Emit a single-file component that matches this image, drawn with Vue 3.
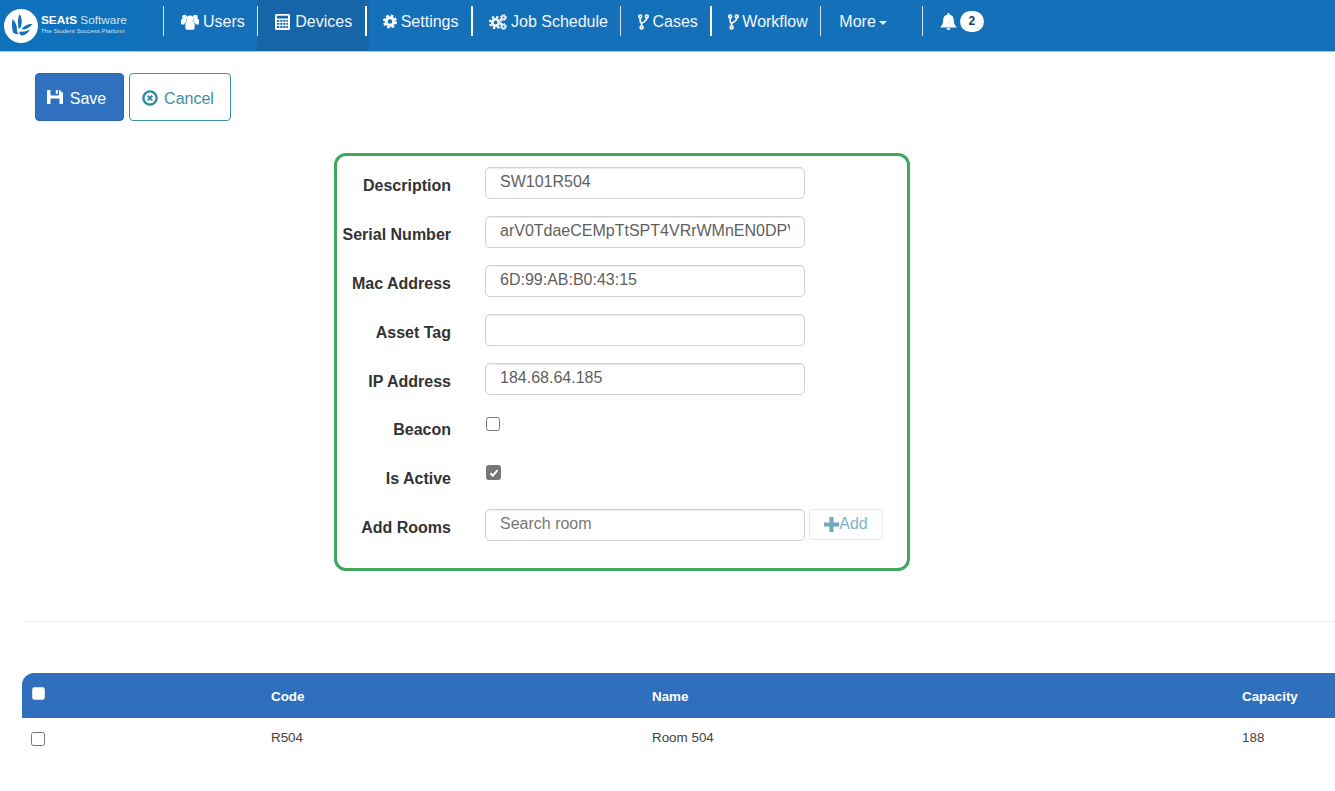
<script setup>
const rooms = [{ code: 'R504', name: 'Room 504', capacity: 188 }];
</script>

<template>
  <div class="page">
    <nav class="navbar">
      <a class="brand">
        <svg class="brand-mark" viewBox="0 0 34 34">
          <circle cx="17" cy="17" r="17" fill="#fff" />
          <path d="M8.500 10c2.500 2.500 4.500 6 4.500 10.500 0 2 .5 3.500 2 4.500-2 .4-4.500 0-6-1.500C8 19 7.500 14 8.500 10z" fill="#1570ba" />
          <path d="M15.500 5c2.300 3 3 8 1.300 13-.6 1-1.300 1.600-2 2-1.300-5-1.200-10.500.7-15z" fill="#1570ba" />
          <path d="M17.500 20.500c2-3.500 6-5.500 11-5.500-2.300 3.500-6 5.500-11 5.500z" fill="#1570ba" />
          <path d="M15 22.500c3 .6 7 0 11-2-2 3.500-5 6-8 6-1.500 0-2.500-1.700-3-4z" fill="#1570ba" />
        </svg>
        <span class="brand-text">
          <span class="brand-name"><b>SEAtS</b> Software</span>
          <span class="brand-sub">The Student Success Platform</span>
        </span>
      </a>
      <ul class="nav-list">
        <li class="nav-item">
          <svg class="ico" width="18" height="16" viewBox="0 0 18 16">
            <circle cx="9" cy="5" r="3.400" /><circle cx="3.600" cy="3.200" r="2.400" /><circle cx="14.400" cy="3.200" r="2.400" />
            <path d="M4.400 9.800c0-1.200 1-2.100 2.200-2.100h4.800c1.200 0 2.200.9 2.200 2.100v4.100c0 1.100-.9 1.900-2 1.900H6.400c-1.100 0-2-.8-2-1.900z" />
            <path d="M0 6.300c0-.7.500-1.200 1.200-1.200h3.900c.1 1 .6 1.800 1.200 2.300-1.600.4-2.800 1.500-3 3.200H1.200C.5 10.600 0 10.100 0 9.400zM18 6.300c0-.7-.5-1.200-1.200-1.200h-3.900c-.1 1-.6 1.800-1.200 2.300 1.600.4 2.800 1.500 3 3.200h3.100c.7 0 1.200-.5 1.200-1.200z" />
          </svg>
          Users
        </li>
        <li class="nav-item active">
          <svg class="ico calc" width="15" height="16" viewBox="0 0 15 16">
            <path fill-rule="evenodd" d="M1.500 0h12c.8 0 1.500.7 1.500 1.500v13c0 .8-.7 1.500-1.500 1.500h-12C.7 16 0 15.300 0 14.500v-13C0 .7.700 0 1.500 0zM2 1.800v2.700h11V1.800zM2 6v1.800h2.300V6zM5.200 6v1.800h2.200V6zM8.300 6v1.800h2.200V6zM11.400 6v1.800H13V6zM2 9v1.800h2.300V9zM5.200 9v1.800h2.200V9zM8.300 9v1.800h2.200V9zM11.400 9v1.800H13V9zM2 12v2h2.300v-2zM5.200 12v2h2.200v-2zM8.300 12v2h2.200v-2zM11.400 12v2H13v-2z" />
          </svg>
          Devices
        </li>
        <li class="nav-item thick">
          <svg class="ico" width="14" height="15" viewBox="0 0 16 16">
            <circle cx="8" cy="8" r="4.300" fill="none" stroke="#fff" stroke-width="3.400" />
            <circle cx="8" cy="8" r="6.800" fill="none" stroke="#fff" stroke-width="2.400" stroke-dasharray="3.100 2.240" />
          </svg>
          Settings
        </li>
        <li class="nav-item thick">
          <svg class="ico" width="18" height="16" viewBox="0 0 18 16">
            <circle cx="6.500" cy="8.500" r="3.200" fill="none" stroke="#fff" stroke-width="2.600" />
            <circle cx="6.500" cy="8.500" r="5.600" fill="none" stroke="#fff" stroke-width="2" stroke-dasharray="2.400 2" />
            <circle cx="14.500" cy="3.500" r="1.800" fill="none" stroke="#fff" stroke-width="1.400" />
            <circle cx="14.500" cy="3.500" r="3" fill="none" stroke="#fff" stroke-width="1" stroke-dasharray="1.300 1.050" />
            <circle cx="14.500" cy="12.500" r="1.800" fill="none" stroke="#fff" stroke-width="1.400" />
            <circle cx="14.500" cy="12.500" r="3" fill="none" stroke="#fff" stroke-width="1" stroke-dasharray="1.300 1.050" />
          </svg>
          Job Schedule
        </li>
        <li class="nav-item">
          <svg class="ico fork" width="11" height="16" viewBox="0 0 11 16">
            <g fill="none" stroke="#fff" stroke-width="1.700">
              <circle cx="2.200" cy="2.400" r="1.400" /><circle cx="8.800" cy="2.400" r="1.400" /><circle cx="3.600" cy="13.600" r="1.400" />
              <path d="M2.200 3.800v3.500c0 1 .8 1.600 1.400 2.200v2.700M8.800 3.800c0 3.200-2.500 3.800-5.200 5.700" />
            </g>
          </svg>
          Cases
        </li>
        <li class="nav-item thick">
          <svg class="ico fork" width="11" height="16" viewBox="0 0 11 16">
            <g fill="none" stroke="#fff" stroke-width="1.700">
              <circle cx="2.200" cy="2.400" r="1.400" /><circle cx="8.800" cy="2.400" r="1.400" /><circle cx="3.600" cy="13.600" r="1.400" />
              <path d="M2.200 3.800v3.500c0 1 .8 1.600 1.400 2.200v2.700M8.800 3.800c0 3.200-2.500 3.800-5.200 5.700" />
            </g>
          </svg>
          Workflow
        </li>
        <li class="nav-item more">More<span class="caret"></span></li>
        <li class="nav-item bell">
          <svg class="ico" width="17" height="17" viewBox="0 0 16 17">
            <path d="M8 0c.6 0 1 .4 1 1v.6c2.600.5 4.300 2.600 4.300 5.400 0 3.500.8 4.800 2.500 6.500v.9H.2v-.9C1.900 11.800 2.700 10.500 2.700 7c0-2.800 1.700-4.900 4.300-5.400V1c0-.6.400-1 1-1zM6 15.200h4c0 1.100-.9 1.800-2 1.800s-2-.7-2-1.800z" />
          </svg>
          <span class="badge">2</span>
        </li>
      </ul>
    </nav>

    <div class="actions">
      <button class="btn btn-save">
        <svg width="16" height="14" viewBox="0 0 16 16" preserveAspectRatio="none" fill="#fff">
          <path fill-rule="evenodd" d="M1 0h2.500v5.500c0 .4.300.7.700.7h7c.4 0 .7-.3.700-.7V0h.6L16 3.500V15c0 .6-.4 1-1 1h-2.500v-5.500c0-.4-.3-.7-.7-.7H4.200c-.4 0-.7.300-.7.700V16H1c-.6 0-1-.4-1-1V1c0-.6.400-1 1-1zM8.800 0h2v4.400h-2z" />
        </svg>
        Save
      </button>
      <button class="btn btn-cancel">
        <svg width="16" height="16" viewBox="0 0 16 16" fill="none" stroke="#2f8aa3">
          <circle cx="8" cy="8" r="6.600" stroke-width="2.400" />
          <path d="M5.700 5.700l4.600 4.600M10.300 5.700l-4.600 4.600" stroke-width="1.900" />
        </svg>
        Cancel
      </button>
    </div>

    <form class="device-form" @submit.prevent>
      <label class="lbl">Description</label>
      <input class="field" value="SW101R504" />
      <label class="lbl">Serial Number</label>
      <input class="field" value="arV0TdaeCEMpTtSPT4VRrWMnEN0DPVx7" />
      <label class="lbl">Mac Address</label>
      <input class="field" value="6D:99:AB:B0:43:15" />
      <label class="lbl">Asset Tag</label>
      <input class="field" />
      <label class="lbl">IP Address</label>
      <input class="field" value="184.68.64.185" />
      <label class="lbl">Beacon</label>
      <div class="check-cell"><span class="check"></span></div>
      <label class="lbl">Is Active</label>
      <div class="check-cell">
        <span class="check checked">
          <svg width="10" height="10" viewBox="0 0 10 10"><path d="M1.500 5.300l2.300 2.500 4.700-5.600" fill="none" stroke="#fff" stroke-width="2" /></svg>
        </span>
      </div>
      <label class="lbl">Add Rooms</label>
      <div class="search-cell">
        <input class="field" placeholder="Search room" />
        <button class="btn-add">
          <svg width="15" height="15" viewBox="0 0 15 15"><path d="M5.500 0h4v5.500H15v4H9.500V15h-4V9.500H0v-4h5.500z" fill="#6fa9c0" /></svg>Add
        </button>
      </div>
    </form>

    <hr class="divider" />

    <div class="rooms">
      <div class="rooms-head">
        <div class="cell-check up"><span class="check head"></span></div>
        <div>Code</div>
        <div>Name</div>
        <div>Capacity</div>
      </div>
      <div v-for="room in rooms" :key="room.code" class="rooms-row">
        <div class="cell-check"><span class="check"></span></div>
        <div>{{ room.code }}</div>
        <div>{{ room.name }}</div>
        <div>{{ room.capacity }}</div>
      </div>
    </div>
  </div>
</template>

<style>
html, body {
  margin: 0;
  background: #fff;
  overflow: hidden;
}
</style>

<style scoped>
.page {
  font-family: "Liberation Sans", Arial, sans-serif;
  color: #333;
  min-height: 791px;
}

.navbar {
  display: flex;
  height: 51px;
  background: #1570ba;
  border-bottom: 1px solid #a6cce8;
  box-sizing: content-box;
}

.brand {
  display: flex;
  align-items: center;
  gap: 3px;
  width: 133px;
  padding-left: 4px;
  background: #0f70bb;
  color: #fff;
}

.brand-mark {
  width: 34px;
  height: 34px;
  flex: none;
}

.brand-text {
  display: flex;
  flex-direction: column;
  margin-top: -5px;
}

.brand-name {
  font-size: 11.800px;
  line-height: 14px;
  white-space: nowrap;
  color: #d5e6f4;
}

.brand-name b {
  color: #fff;
}

.brand-sub {
  font-size: 6.200px;
  line-height: 7px;
  white-space: nowrap;
  color: #cfe3f3;
}

.nav-list {
  display: flex;
  list-style: none;
  margin: 0 0 0 26px;
  padding: 0;
}

.nav-item {
  position: relative;
  display: flex;
  align-items: center;
  gap: 4px;
  padding: 0 12.500px 8px 18px;
  font-size: 16px;
  color: #f2f7fb;
  white-space: nowrap;
}

.nav-item::before {
  content: "";
  position: absolute;
  left: 0;
  top: 6px;
  height: 30px;
  width: 1px;
  background: #d5e6f4;
}

.nav-item.thick::before {
  width: 2px;
  background: #fff;
}

.nav-item.active {
  background: #1565a8;
  padding-right: 16.500px;
  margin-right: -4px;
}

.ico {
  fill: #fff;
  flex: none;
}

.calc {
  margin-right: 1px;
}

.fork {
  margin-right: -1px;
}

.more {
  gap: 0;
  padding-left: 19px;
  padding-right: 35px;
}

.caret {
  width: 0;
  height: 0;
  margin-left: 3px;
  margin-top: 2px;
  border-top: 4px solid #f2f7fb;
  border-left: 4px solid transparent;
  border-right: 4px solid transparent;
}

.bell {
  gap: 3px;
}

.badge {
  display: inline-block;
  min-width: 24px;
  height: 21px;
  line-height: 21px;
  border-radius: 11px;
  background: #fff;
  color: #123f6b;
  font-size: 12px;
  font-weight: 700;
  text-align: center;
}

.actions {
  display: flex;
  gap: 5px;
  padding: 21px 0 0 35px;
}

.btn {
  display: flex;
  align-items: center;
  justify-content: center;
  gap: 7px;
  height: 48px;
  padding: 4px 6px 0 0;
  border-radius: 4px;
  font-family: inherit;
  font-size: 16px;
}

.btn-save {
  width: 89px;
  background: #2f70bf;
  border: 1px solid #2a67b0;
  color: #fff;
}

.btn-save svg {
  margin-top: -4px;
}

.btn-cancel {
  gap: 6px;
  padding-right: 4px;
  width: 102px;
  background: #fff;
  border: 1px solid #3b8ea5;
  color: #3d8ea6;
}

.btn-cancel svg {
  margin-top: -3px;
}

.device-form {
  display: grid;
  grid-template-columns: 114px 320px;
  grid-auto-rows: 32px;
  column-gap: 34px;
  row-gap: 16.800px;
  width: 576px;
  height: 418px;
  box-sizing: border-box;
  margin: 32px 0 0 334px;
  padding: 11.400px 0 0;
  border: 3px solid #3fa760;
  border-radius: 12px;
}

.lbl {
  justify-self: end;
  padding-top: 9px;
  font-size: 16px;
  font-weight: 700;
  line-height: 20px;
  white-space: nowrap;
}

.field {
  width: 320px;
  height: 32px;
  box-sizing: border-box;
  padding: 0 14px 2px;
  border: 1px solid #d2d2d2;
  border-radius: 5px;
  font-family: inherit;
  font-size: 16px;
  color: #5f5f5f;
  box-shadow: inset 0 1px 1px rgba(0, 0, 0, 0.075);
  outline: none;
}

.field::placeholder {
  color: #777;
  opacity: 1;
}

.check-cell {
  padding: 6px 0 0 1px;
}

.check {
  display: block;
  width: 14px;
  height: 14px;
  box-sizing: border-box;
  background: #fff;
  border: 1px solid #767676;
  border-radius: 2.500px;
}

.check.checked {
  display: flex;
  align-items: center;
  justify-content: center;
  width: 15px;
  height: 15px;
  margin-top: -1px;
  background: #767676;
}

.check.head {
  width: 13px;
  height: 13px;
  border-color: #dcdcdc;
}

.search-cell {
  position: relative;
}

.btn-add {
  position: absolute;
  left: 324px;
  top: 0;
  display: flex;
  align-items: center;
  justify-content: center;
  width: 74px;
  height: 31px;
  padding: 0;
  background: #fff;
  border: 1px solid #e3e8ea;
  border-radius: 3px;
  font-family: inherit;
  font-size: 16px;
  color: #7fb2c8;
}

.divider {
  height: 0;
  margin: 50px 0 0 22px;
  border: 0;
  border-top: 1px solid #f2f2f2;
}

.rooms {
  margin: 51px 0 0 22px;
  font-size: 13.400px;
}

.rooms-head,
.rooms-row {
  display: grid;
  grid-template-columns: 249px 381px 590px 1fr;
  align-items: center;
}

.rooms-head {
  height: 45px;
  background: #2f6fbe;
  border-top-left-radius: 12px;
  color: #fff;
  font-weight: 700;
  padding-top: 2px;
  box-sizing: border-box;
}

.rooms-row {
  height: 38px;
  color: #444;
}

.cell-check {
  padding: 3px 0 0 9px;
}

.cell-check.up {
  padding: 0 0 0 10px;
  margin-top: -6px;
}
</style>
